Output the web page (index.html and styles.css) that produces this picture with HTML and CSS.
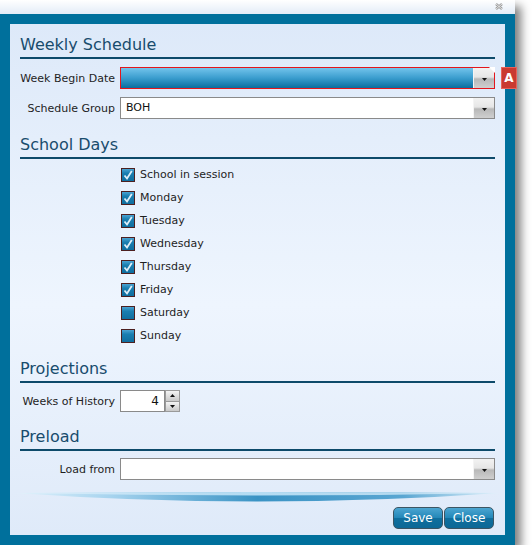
FILE: index.html
```html
<!DOCTYPE html>
<html>
<head>
<meta charset="utf-8">
<link rel="stylesheet" href="styles.css">
</head>
<body>
<div class="window">
  <div class="titlebar">
    <svg class="close-x" viewBox="0 0 8 7" width="8" height="7">
      <path d="M1 1 L7 6 M7 1 L1 6" stroke="#9a9a9a" stroke-width="2.4" fill="none"/>
      <path d="M1 1 L7 6 M7 1 L1 6" stroke="#f4f4f4" stroke-width="0.8" fill="none"/>
    </svg>
  </div>
  <div class="frame">
    <div class="panel">
      <h2 class="section-title">Weekly Schedule</h2>
      <div class="form-group">
        <div class="field-row">
          <span class="label">Week Begin Date</span>
          <div class="combo combo-error">
            <span class="combo-text"></span>
            <span class="combo-btn"><svg viewBox="0 0 5 3" width="5" height="3"><path d="M0 0 H5 L2.5 3 Z" fill="#111"/></svg></span>
            <span class="error-corner"></span>
          </div>
          <span class="badge">A</span>
        </div>
        <div class="field-row">
          <span class="label">Schedule Group</span>
          <div class="combo">
            <span class="combo-text">BOH</span>
            <span class="combo-btn"><svg viewBox="0 0 5 3" width="5" height="3"><path d="M0 0 H5 L2.5 3 Z" fill="#111"/></svg></span>
          </div>
        </div>
      </div>

      <h2 class="section-title title-school">School Days</h2>
      <div class="check-list">
        <div class="check-row"><span class="checkbox"><svg viewBox="0 0 12 12" width="12" height="12"><path d="M2.5 6.5 L5 9.5 L9.8 2" stroke="#dfeef8" stroke-width="1.8" fill="none"/></svg></span><span class="check-label">School in session</span></div>
        <div class="check-row"><span class="checkbox"><svg viewBox="0 0 12 12" width="12" height="12"><path d="M2.5 6.5 L5 9.5 L9.8 2" stroke="#dfeef8" stroke-width="1.8" fill="none"/></svg></span><span class="check-label">Monday</span></div>
        <div class="check-row"><span class="checkbox"><svg viewBox="0 0 12 12" width="12" height="12"><path d="M2.5 6.5 L5 9.5 L9.8 2" stroke="#dfeef8" stroke-width="1.8" fill="none"/></svg></span><span class="check-label">Tuesday</span></div>
        <div class="check-row"><span class="checkbox"><svg viewBox="0 0 12 12" width="12" height="12"><path d="M2.5 6.5 L5 9.5 L9.8 2" stroke="#dfeef8" stroke-width="1.8" fill="none"/></svg></span><span class="check-label">Wednesday</span></div>
        <div class="check-row"><span class="checkbox"><svg viewBox="0 0 12 12" width="12" height="12"><path d="M2.5 6.5 L5 9.5 L9.8 2" stroke="#dfeef8" stroke-width="1.8" fill="none"/></svg></span><span class="check-label">Thursday</span></div>
        <div class="check-row"><span class="checkbox"><svg viewBox="0 0 12 12" width="12" height="12"><path d="M2.5 6.5 L5 9.5 L9.8 2" stroke="#dfeef8" stroke-width="1.8" fill="none"/></svg></span><span class="check-label">Friday</span></div>
        <div class="check-row"><span class="checkbox"></span><span class="check-label">Saturday</span></div>
        <div class="check-row"><span class="checkbox"></span><span class="check-label">Sunday</span></div>
      </div>

      <h2 class="section-title title-proj">Projections</h2>
      <div class="field-row row-after-title">
        <span class="label">Weeks of History</span>
        <div class="spin-input">4</div>
        <div class="spin-btns">
          <span class="spin-btn"><svg viewBox="0 0 5 3" width="5" height="3"><path d="M0 3 H5 L2.5 0 Z" fill="#111"/></svg></span>
          <span class="spin-btn"><svg viewBox="0 0 5 3" width="5" height="3"><path d="M0 0 H5 L2.5 3 Z" fill="#111"/></svg></span>
        </div>
      </div>

      <h2 class="section-title title-preload">Preload</h2>
      <div class="field-row row-after-title">
        <span class="label">Load from</span>
        <div class="combo">
          <span class="combo-text"></span>
          <span class="combo-btn"><svg viewBox="0 0 5 3" width="5" height="3"><path d="M0 0 H5 L2.5 3 Z" fill="#111"/></svg></span>
        </div>
      </div>

      <svg class="swoosh" viewBox="0 0 495 27" width="495" height="27" preserveAspectRatio="none">
        <defs>
          <linearGradient id="sw" x1="0" y1="0" x2="1" y2="0">
            <stop offset="0" stop-color="#e2f2fc"/>
            <stop offset="0.2" stop-color="#a6d3ee"/>
            <stop offset="0.5" stop-color="#3a93c4"/>
            <stop offset="0.8" stop-color="#5aa6d2"/>
            <stop offset="1" stop-color="#e2f2fc"/>
          </linearGradient>
          <linearGradient id="swt" x1="0" y1="0" x2="1" y2="0">
            <stop offset="0" stop-color="#eaf6fd" stop-opacity="0.6"/>
            <stop offset="0.5" stop-color="#b4dcf3"/>
            <stop offset="1" stop-color="#eaf6fd" stop-opacity="0.6"/>
          </linearGradient>
        </defs>
        <path d="M5 13 Q247 11 490 13 Q247 30 5 13 Z" fill="url(#sw)"/>
        <path d="M5 13 Q247 11 490 13 Q247 18 5 13 Z" fill="url(#swt)"/>
      </svg>

      <div class="button-row">
        <button class="btn">Save</button>
        <button class="btn">Close</button>
      </div>
    </div>
  </div>
</div>
</body>
</html>
```

FILE: styles.css
```css
body {
  margin: 0;
  background: #ffffff;
  font-family: "DejaVu Sans", Verdana, sans-serif;
}

.window {
  width: 515px;
  box-shadow: 6px 6px 9px rgba(0, 0, 0, 0.5);
}

.titlebar {
  height: 14px;
  background: linear-gradient(#ffffff, #e3ecf7);
  display: flex;
  justify-content: flex-end;
  align-items: flex-start;
  padding-right: 12px;
}

.close-x {
  display: block;
  margin-top: 3px;
}

.frame {
  background: #00709c;
  padding: 10px;
}

.panel {
  height: 511px;
  box-sizing: border-box;
  padding: 11px 10px 6px;
  background: linear-gradient(#dde9f9, #eef5fe 55%, #dfeaf9);
  display: flex;
  flex-direction: column;
}

.section-title {
  margin: 0;
  font-weight: normal;
  font-size: 16px;
  line-height: 20px;
  color: #184c6d;
  padding-bottom: 2px;
  border-bottom: 2px solid #0d4a6a;
}

.title-school { margin-top: 16px; }
.title-proj { margin-top: 12px; }
.title-preload { margin-top: 15px; }

.form-group {
  margin-top: 8px;
  display: flex;
  flex-direction: column;
  gap: 8px;
}

.field-row {
  display: flex;
  align-items: center;
  height: 22px;
  position: relative;
}

.row-after-title { margin-top: 7px; }

.label {
  flex: none;
  width: 95px;
  margin-right: 5px;
  text-align: right;
  font-size: 11px;
  color: #1e1e1e;
}

.combo {
  flex: 1;
  height: 22px;
  box-sizing: border-box;
  border: 1px solid #8a8a8a;
  background: #ffffff;
  display: flex;
  position: relative;
}

.combo-text {
  flex: 1;
  font-size: 11px;
  line-height: 20px;
  padding-left: 5px;
  color: #111;
}

.combo-btn {
  width: 20px;
  border-left: 1px solid #f4f4f4;
  background: linear-gradient(#f2f2f2, #e6e6e6 45%, #b8b8b8 55%, #cfcfcf);
  display: flex;
  align-items: center;
  justify-content: center;
}

.combo-btn svg { display: block; margin-top: 2px; }

.combo-error {
  border-color: #e3161c;
  background: linear-gradient(#72c3eb, #3a9dce 50%, #0a6e9e);
}

.error-corner {
  position: absolute;
  right: -1px;
  top: -1px;
  width: 6px;
  height: 6px;
  background: #ffffff;
  clip-path: polygon(0 0, 100% 0, 100% 100%);
}

.badge {
  position: absolute;
  left: 481px;
  top: 0;
  width: 16px;
  height: 22px;
  box-sizing: border-box;
  background: #c93a31;
  border: 1px solid #e8625a;
  color: #ffffff;
  font-weight: bold;
  font-size: 12px;
  line-height: 20px;
  text-align: center;
}

.check-list {
  margin-top: 4px;
  margin-left: 101px;
  display: flex;
  flex-direction: column;
}

.check-row {
  height: 23px;
  display: flex;
  align-items: center;
}

.checkbox {
  width: 14px;
  height: 14px;
  box-sizing: border-box;
  border: 1px solid #4c2020;
  background: linear-gradient(#4aa3d2, #1a7eb0 35%, #0f6e9f);
  margin-right: 5px;
  display: flex;
  align-items: center;
  justify-content: center;
}

.checkbox svg { display: block; }

.check-label {
  font-size: 11px;
  color: #1e1e1e;
}

.spin-input {
  width: 45px;
  height: 22px;
  box-sizing: border-box;
  border: 1px solid #8a8a8a;
  background: #ffffff;
  font-size: 12px;
  line-height: 20px;
  text-align: right;
  padding-right: 5px;
  color: #111;
}

.spin-btns {
  width: 15px;
  height: 22px;
  display: flex;
  flex-direction: column;
}

.spin-btn {
  flex: 1;
  border: 1px solid #9a9a9a;
  background: linear-gradient(#f4f4f4, #c9c9c9);
  display: flex;
  align-items: center;
  justify-content: center;
}

.spin-btn + .spin-btn { border-top: none; }

.spin-btn svg { display: block; }

.swoosh {
  display: block;
  margin: 0 -10px;
  width: 495px;
  height: 27px;
}

.button-row {
  display: flex;
  justify-content: flex-end;
  gap: 1px;
  margin-right: 1px;
}

.btn {
  width: 50px;
  height: 22px;
  box-sizing: border-box;
  border: 1px solid #3c5563;
  border-radius: 5px;
  background: linear-gradient(#4ba5d1, #2488b9 48%, #0f6f9e 52%, #0c6896);
  color: #ffffff;
  font-family: "DejaVu Sans", Verdana, sans-serif;
  font-size: 12px;
  line-height: 20px;
  padding: 0;
  text-align: center;
}
```
